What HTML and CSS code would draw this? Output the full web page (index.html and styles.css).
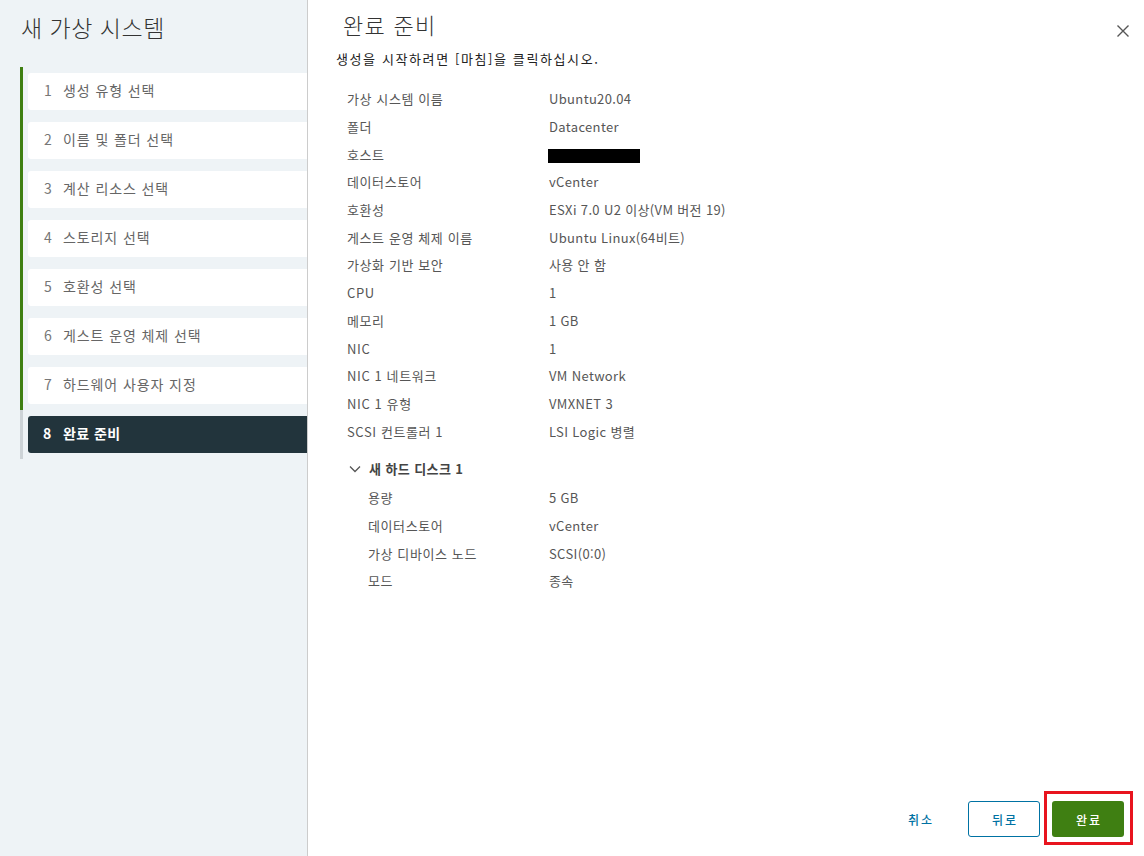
FILE: index.html
```html
<!DOCTYPE html>
<html lang="ko">
<head>
<meta charset="utf-8">
<title>새 가상 시스템</title>
<link rel="stylesheet" href="styles.css">
</head>
<body>
<div class="app">
  <aside class="sidebar">
    <h1 class="title">새 가상 시스템</h1>
    <ol class="steps">
      <li class="step done"><div class="card"><span class="num">1</span><span class="label">생성 유형 선택</span></div></li>
      <li class="step done"><div class="card"><span class="num">2</span><span class="label">이름 및 폴더 선택</span></div></li>
      <li class="step done"><div class="card"><span class="num">3</span><span class="label">계산 리소스 선택</span></div></li>
      <li class="step done"><div class="card"><span class="num">4</span><span class="label">스토리지 선택</span></div></li>
      <li class="step done"><div class="card"><span class="num">5</span><span class="label">호환성 선택</span></div></li>
      <li class="step done"><div class="card"><span class="num">6</span><span class="label">게스트 운영 체제 선택</span></div></li>
      <li class="step done"><div class="card"><span class="num">7</span><span class="label">하드웨어 사용자 지정</span></div></li>
      <li class="step current"><div class="card"><span class="num">8</span><span class="label">완료 준비</span></div></li>
    </ol>
  </aside>
  <main class="main">
    <header class="header">
      <h2 class="heading">완료 준비</h2>
      <button class="close" aria-label="닫기">
        <svg width="14" height="14" viewBox="0 0 14 14"><path d="M1.5 1.5 L12.5 12.5 M12.5 1.5 L1.5 12.5" stroke="#565656" stroke-width="1.4" fill="none"/></svg>
      </button>
    </header>
    <p class="intro">생성을 시작하려면 [마침]을 클릭하십시오.</p>
    <div class="summary">
      <div class="row"><span class="k">가상 시스템 이름</span><span class="v">Ubuntu20.04</span></div>
      <div class="row"><span class="k">폴더</span><span class="v">Datacenter</span></div>
      <div class="row"><span class="k">호스트</span><span class="v"><span class="redact"></span></span></div>
      <div class="row"><span class="k">데이터스토어</span><span class="v">vCenter</span></div>
      <div class="row"><span class="k">호환성</span><span class="v">ESXi 7.0 U2 이상(VM 버전 19)</span></div>
      <div class="row"><span class="k">게스트 운영 체제 이름</span><span class="v">Ubuntu Linux(64비트)</span></div>
      <div class="row"><span class="k">가상화 기반 보안</span><span class="v">사용 안 함</span></div>
      <div class="row"><span class="k">CPU</span><span class="v">1</span></div>
      <div class="row"><span class="k">메모리</span><span class="v">1 GB</span></div>
      <div class="row"><span class="k">NIC</span><span class="v">1</span></div>
      <div class="row"><span class="k">NIC 1 네트워크</span><span class="v">VM Network</span></div>
      <div class="row"><span class="k">NIC 1 유형</span><span class="v">VMXNET 3</span></div>
      <div class="row"><span class="k">SCSI 컨트롤러 1</span><span class="v">LSI Logic 병렬</span></div>
    </div>
    <div class="group">
      <div class="group-head">
        <svg class="chev" width="12" height="8" viewBox="0 0 12 8"><path d="M1 1.5 L6 6.5 L11 1.5" stroke="#565656" stroke-width="1.3" fill="none"/></svg>
        <span>새 하드 디스크 1</span>
      </div>
      <div class="row sub"><span class="k">용량</span><span class="v">5 GB</span></div>
      <div class="row sub"><span class="k">데이터스토어</span><span class="v">vCenter</span></div>
      <div class="row sub"><span class="k">가상 디바이스 노드</span><span class="v">SCSI(0:0)</span></div>
      <div class="row sub"><span class="k">모드</span><span class="v">종속</span></div>
    </div>
    <footer class="footer">
      <button class="btn flat">취소</button>
      <button class="btn outline">뒤로</button>
      <span class="highlight-wrap">
        <button class="btn primary">완료</button>
        <span class="highlight"></span>
      </span>
    </footer>
  </main>
</div>
</body>
</html>
```

FILE: styles.css
```css
* { box-sizing: border-box; }
html, body {
  margin: 0;
  padding: 0;
  background: #fff;
  font-family: "Noto Sans CJK KR", "Noto Sans", sans-serif;
  color: #565656;
}
.app {
  display: flex;
  width: 1144px;
  height: 856px;
}
.sidebar {
  width: 308px;
  flex: none;
  background: #eef3f6;
  border-right: 1px solid #cccccc;
  padding: 0 0 0 20px;
}
.title {
  margin: 12px 0 0 1px;
  font-size: 23px;
  line-height: 30px;
  font-weight: 300;
  color: #333;
  letter-spacing: 0.5px;
}
.steps {
  list-style: none;
  margin: 25px 0 0 0;
  padding: 0;
}
.step {
  border-left: 3px solid #3f7f12;
  padding: 6px 0 6px 5px;
}
.step.current {
  border-left-color: #cdd3d7;
}
.card {
  height: 37px;
  background: #fff;
  border-radius: 3px 0 0 3px;
  display: flex;
  align-items: center;
  padding: 0 0 3px 16px;
  font-size: 14px;
  color: #666;
}
.num {
  width: 19px;
  flex: none;
  color: #777;
}
.label { letter-spacing: 0.9px; }
.current .card {
  background: #22343c;
  color: #fff;
  font-weight: 700;
  padding-left: 15px;
}
.current .num { color: #fff; width: 20px; }
.current .label { letter-spacing: 0.4px; }

.main {
  flex: 1;
  display: flex;
  flex-direction: column;
  padding: 0 20px 19px 28px;
}
.header {
  display: flex;
  justify-content: space-between;
  align-items: flex-start;
  padding-top: 9px;
}
.heading {
  margin: 0 0 0 7px;
  font-size: 22px;
  line-height: 30px;
  font-weight: 300;
  color: #333;
  letter-spacing: 1.3px;
}
.close {
  background: none;
  border: 0;
  padding: 0;
  margin: 15px -6px 0 0;
  width: 14px;
  height: 14px;
  display: flex;
}
.intro {
  margin: 10px 0 0 0;
  font-size: 13px;
  line-height: 20px;
  color: #222;
  letter-spacing: 1.6px;
}
.summary {
  margin-top: 16px;
  padding-left: 11px;
}
.row {
  display: flex;
  height: 27.7px;
  align-items: center;
  font-size: 13px;
}
.k {
  width: 202px;
  flex: none;
  color: #565656;
  letter-spacing: 0.6px;
}
.v { color: #565656; letter-spacing: 0.35px; }
.redact {
  display: inline-block;
  width: 92px;
  height: 14px;
  background: #000;
  vertical-align: middle;
  margin-left: -1px;
}
.group {
  margin-top: 10px;
  padding-left: 11px;
}
.group-head {
  height: 28px;
  display: flex;
  align-items: center;
  font-size: 13px;
  font-weight: 700;
  color: #444;
  letter-spacing: 0.4px;
}
.chev { margin: 0 8px 0 2px; }
.row.sub { position: relative; top: 1px; }
.row.sub .k {
  padding-left: 21px;
}
.footer {
  margin-top: auto;
  display: flex;
  justify-content: flex-end;
  align-items: center;
  gap: 12px;
}
.btn {
  width: 72px;
  height: 36px;
  border-radius: 3px;
  font-family: inherit;
  font-size: 12px;
  font-weight: 500;
  letter-spacing: 2px;
  padding: 0 0 0 2px;
  background: #fff;
}
.btn.flat {
  border: 0;
  color: #0072a3;
}
.btn.outline {
  border: 1px solid #0072a3;
  color: #0072a3;
}
.btn.primary {
  border: 0;
  background: #3f7f12;
  color: #fff;
  display: block;
}
.highlight-wrap {
  position: relative;
  display: block;
}
.highlight {
  position: absolute;
  top: -10px;
  left: -8px;
  right: -9px;
  bottom: -8px;
  border: 3px solid #e8141e;
  pointer-events: none;
}
```
